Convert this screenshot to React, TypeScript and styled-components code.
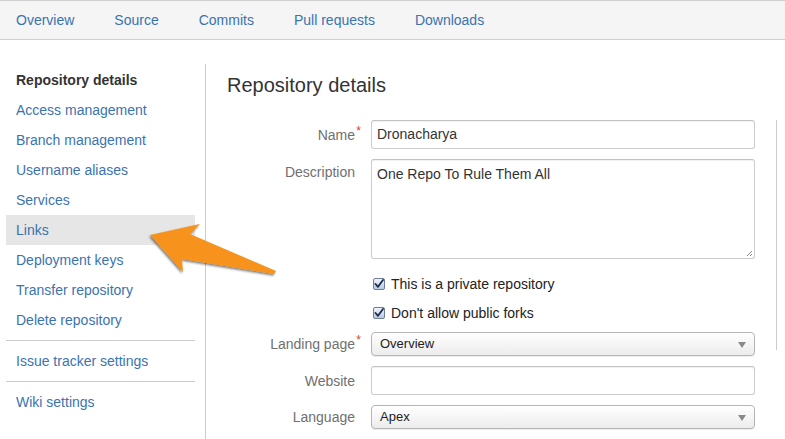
import React from "react";
import styled, { createGlobalStyle } from "styled-components";

const GlobalStyle = createGlobalStyle`
  html, body { margin: 0; padding: 0; background: #fff; }
  body { font-family: "Liberation Sans", Arial, Helvetica, sans-serif; font-size: 14px; color: #333; overflow: hidden; }
  * { box-sizing: border-box; }
`;

const LINK = "#3b73af";

const Page = styled.div`
  position: relative;
  width: 785px;
  height: 439px;
  overflow: hidden;
`;

const NavBar = styled.nav`
  height: 40px;
  background: #f5f5f5;
  border-top: 1px solid #cfcfcf;
  border-bottom: 1px solid #cfcfcf;
  display: flex;
  align-items: center;
  padding-left: 16px;
  gap: 40px;
`;

const NavLink = styled.a`
  color: ${LINK};
  font-size: 14px;
  line-height: 20px;
  text-decoration: none;
`;

const Body = styled.div`
  display: flex;
  padding-top: 24px;
`;

const Sidebar = styled.aside`
  width: 206px;
  flex: none;
  height: 420px;
  padding: 1px 10px 0 6px;
  border-right: 1px solid #cccccc;
`;

const SideItem = styled.a<{ $current?: boolean; $active?: boolean }>`
  display: block;
  height: 30px;
  line-height: 31px;
  padding: 0 10px;
  font-size: 14px;
  text-decoration: none;
  color: ${(p) => (p.$current ? "#333" : LINK)};
  font-weight: ${(p) => (p.$current ? "bold" : "normal")};
  background: ${(p) => (p.$active ? "#e6e6e6" : "transparent")};
`;

const SideSep = styled.div`
  height: 1px;
  background: #cccccc;
  margin: 5px 0;
`;

const Main = styled.main`
  flex: 1;
  padding-left: 21px;
`;

const Heading = styled.h1`
  margin: 9px 0 0;
  font-size: 20px;
  line-height: 24px;
  font-weight: normal;
  color: #333;
`;

const FormArea = styled.div`
  display: flex;
  margin-top: 23px;
`;

const Form = styled.form`
  width: 528px;
  display: flex;
  flex-direction: column;
`;

const Aside = styled.div`
  margin-left: 21px;
  width: 1px;
  height: 230px;
  border-left: 1px solid #cccccc;
`;

const Row = styled.div<{ $top?: boolean; $mb?: number }>`
  display: grid;
  grid-template-columns: 128px 384px;
  column-gap: 16px;
  align-items: ${(p) => (p.$top ? "start" : "center")};
  margin-bottom: ${(p) => (p.$mb ?? 10)}px;
`;

const Label = styled.label<{ $pt?: number }>`
  position: relative;
  text-align: right;
  color: #707070;
  font-size: 14px;
  line-height: 20px;
  padding-top: ${(p) => p.$pt ?? 0}px;
`;

const Req = styled.span`
  position: absolute;
  right: -6px;
  top: -4px;
  color: #d04437;
  font-size: 12px;
`;

const TextInput = styled.div`
  height: 29px;
  border: 1px solid #cccccc;
  border-top-color: #c2c2c2;
  border-radius: 3px;
  box-shadow: inset 0 1px 1px rgba(0, 0, 0, 0.06);
  padding: 0 5px;
  font-size: 14px;
  line-height: 27px;
  color: #333;
  background: #fff;
`;

const TextArea = styled.div`
  position: relative;
  height: 100px;
  border: 1px solid #cccccc;
  border-top-color: #c2c2c2;
  border-radius: 3px;
  box-shadow: inset 0 1px 1px rgba(0, 0, 0, 0.06);
  padding: 4px 5px;
  font-size: 14px;
  line-height: 20px;
  color: #333;
  background: #fff;
`;

const Grip = styled.svg`
  position: absolute;
  right: 1px;
  bottom: 1px;
`;

const Select = styled.div`
  position: relative;
  height: 24px;
  border: 1px solid #b5b5b5;
  border-radius: 4px;
  background: linear-gradient(#ffffff, #ececec);
  box-shadow: 0 1px 1px rgba(0, 0, 0, 0.08);
  padding: 0 8px;
  font-size: 13px;
  line-height: 22px;
  color: #222;
`;

const Caret = styled.span`
  position: absolute;
  right: 8px;
  top: 9px;
  width: 0;
  height: 0;
  border-left: 4px solid transparent;
  border-right: 4px solid transparent;
  border-top: 6px solid #8a8a8a;
`;

const CheckRow = styled.div<{ $mb?: number }>`
  display: flex;
  align-items: center;
  gap: 6px;
  height: 29px;
  margin-left: 145px;
  margin-bottom: ${(p) => p.$mb ?? 0}px;
  font-size: 14px;
  color: #222;
`;

const Box = styled.span`
  width: 12px;
  height: 12px;
  margin-left: 1px;
  border: 1px solid #6f7f9a;
  border-radius: 2px;
  background: linear-gradient(#eef3fb, #b9c9e2);
  display: flex;
  align-items: center;
  justify-content: center;
`;

const Arrow = styled.svg`
  position: absolute;
  left: 140px;
  top: 215px;
  pointer-events: none;
`;

function Checkbox() {
  return (
    <Box>
      <svg width="10" height="10" viewBox="0 0 10 10">
        <path d="M1.5 5 L4 7.8 L9 1" fill="none" stroke="#1a2a4a" strokeWidth="1.8" strokeLinecap="round" strokeLinejoin="round" />
      </svg>
    </Box>
  );
}

export default function App() {
  const side = [
    "Access management",
    "Branch management",
    "Username aliases",
    "Services",
    "Links",
    "Deployment keys",
    "Transfer repository",
    "Delete repository",
  ];
  return (
    <Page>
      <GlobalStyle />
      <NavBar>
        {["Overview", "Source", "Commits", "Pull requests", "Downloads"].map((n) => (
          <NavLink key={n}>{n}</NavLink>
        ))}
      </NavBar>
      <Body>
        <Sidebar>
          <SideItem $current>Repository details</SideItem>
          {side.map((s) => (
            <SideItem key={s} $active={s === "Links"}>
              {s}
            </SideItem>
          ))}
          <SideSep />
          <SideItem>Issue tracker settings</SideItem>
          <SideSep />
          <SideItem>Wiki settings</SideItem>
        </Sidebar>
        <Main>
          <Heading>Repository details</Heading>
          <FormArea>
            <Form>
              <Row>
                <Label>
                  Name<Req>*</Req>
                </Label>
                <TextInput>Dronacharya</TextInput>
              </Row>
              <Row $top>
                <Label $pt={3}>Description</Label>
                <TextArea>
                  One Repo To Rule Them All
                  <Grip width="8" height="8" viewBox="0 0 8 8">
                    <path d="M7 2 L2 7 M7 5 L5 7" stroke="#888" strokeWidth="1" />
                  </Grip>
                </TextArea>
              </Row>
              <CheckRow>
                <Checkbox />
                This is a private repository
              </CheckRow>
              <CheckRow $mb={5}>
                <Checkbox />
                Don't allow public forks
              </CheckRow>
              <Row>
                <Label>
                  Landing page<Req>*</Req>
                </Label>
                <Select>
                  Overview
                  <Caret />
                </Select>
              </Row>
              <Row>
                <Label $pt={0}>Website</Label>
                <TextInput />
              </Row>
              <Row>
                <Label>Language</Label>
                <Select>
                  Apex
                  <Caret />
                </Select>
              </Row>
              <Row>
                <Label />
                <TextInput />
              </Row>
            </Form>
            <Aside />
          </FormArea>
        </Main>
      </Body>
      <Arrow width="150" height="70" viewBox="0 0 150 70">
        <defs>
          <filter id="sh" x="-20%" y="-30%" width="140%" height="170%">
            <feDropShadow dx="-1" dy="1.5" stdDeviation="1.2" floodColor="#000" floodOpacity="0.55" />
          </filter>
        </defs>
        <polygon
          points="10,20 60,9 50,19 136,56 134,59 42,44 43,57"
          fill="#f7931e"
          filter="url(#sh)"
          strokeLinejoin="round"
        />
      </Arrow>
    </Page>
  );
}
